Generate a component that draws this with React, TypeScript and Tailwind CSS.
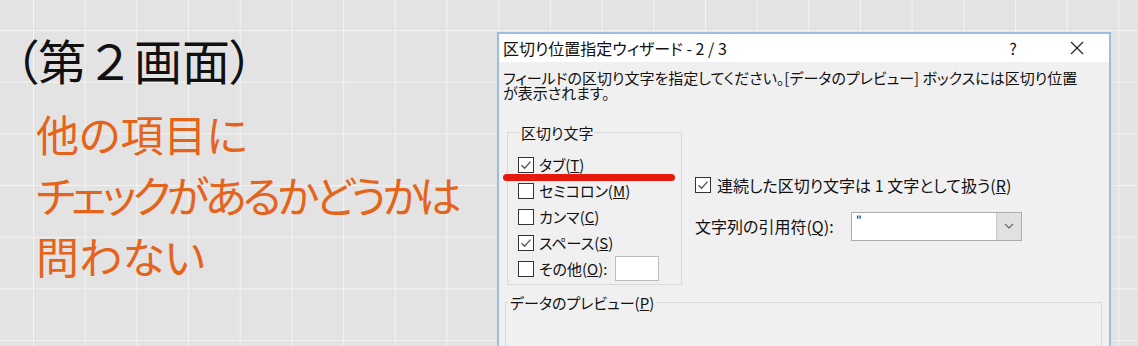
import React from "react"

const jp = "font-['Noto_Sans_CJK_JP',sans-serif]"

function Box({ checked }: { checked?: boolean }) {
  return (
    <span className="w-[16px] h-[16px] border border-[#333] bg-white flex items-center justify-center shrink-0">
      {checked && (
        <svg width="14" height="14" viewBox="0 0 14 14">
          <path d="M2.5 7.2 L5.6 10.2 L11.5 3.6" stroke="#555" strokeWidth="1.3" fill="none" />
        </svg>
      )}
    </span>
  )
}

function Option({ checked, label, k, after }: { checked?: boolean; label: string; k: string; after?: string }) {
  return (
    <div className="flex items-center gap-[5px] h-[26px]">
      <Box checked={checked} />
      <span className="text-[15px] leading-none text-[#111] [font-feature-settings:'palt']">
        {label}(<u>{k}</u>){after}
      </span>
    </div>
  )
}

export default function App() {
  return (
    <div
      className={`${jp} relative w-[1138px] h-[346px] overflow-hidden flex bg-[#e3e3e3] bg-[linear-gradient(to_right,#f3f3f3_1px,transparent_1px),linear-gradient(to_bottom,#f3f3f3_1px,transparent_1px)] bg-[size:51.7px_51.7px] bg-[position:33px_30px]`}
    >
      {/* left caption */}
      <div className="w-[497px] shrink-0 pt-[35px] whitespace-nowrap">
        <div className="pl-[14px] text-[48px] leading-[48px] text-[#111]">
          <span className="[font-feature-settings:'palt']">（</span>第２画面<span className="[font-feature-settings:'palt']">）</span>
        </div>
        <div className="mt-[20px] pl-[36px] text-[43px] leading-[61px] text-[#e5641c] [font-feature-settings:'palt']">
          <div>他の項目に</div>
          <div className="tracking-[-4px]">チェックがあるかどうかは</div>
          <div>問わない</div>
        </div>
      </div>

      {/* dialog */}
      <div className="mt-[32px] w-[614px] h-[330px] shrink-0 border-2 border-[#9cbde2] bg-[#f0f0f0] flex flex-col">
        <div className="h-[34px] bg-white flex items-center pl-[4px] text-[16px] text-[#111] [font-feature-settings:'palt']">
          <span className="flex-1">区切り位置指定ウィザード - 2 / 3</span>
          <span className="w-[20px] text-center mr-[46px]">?</span>
          <svg width="16" height="16" viewBox="0 0 16 16" className="mr-[24px]">
            <path d="M2 2 L14 14 M14 2 L2 14" stroke="#222" strokeWidth="1.2" />
          </svg>
        </div>

        <div className="pl-[4px] pt-[8px] text-[15px] leading-[15px] text-[#111] whitespace-nowrap [font-feature-settings:'palt']">
          <div>フィールドの区切り文字を指定してください。[データのプレビュー] ボックスには区切り位置</div>
          <div>が表示されます。</div>
        </div>

        <div className="flex mt-[24px]">
          <fieldset className="ml-[8px] w-[175px] h-[161px] border border-[#d9d9d9] pl-[10px] pt-[10px]">
            <legend className="ml-[1px] px-[2px] text-[15px] leading-[18px] text-[#111] [font-feature-settings:'palt']">区切り文字</legend>
            <Option checked label="タブ" k="T" />
            <Option label="セミコロン" k="M" />
            <Option label="カンマ" k="C" />
            <Option checked label="スペース" k="S" />
            <div className="flex items-center h-[26px]">
              <Option label="その他" k="O" after=":" />
              <span className="ml-[8px] w-[44px] h-[25px] bg-white border border-[#bdbdbd]" />
            </div>
          </fieldset>

          <div className="ml-[13px] pt-[53px]">
            <div className="flex items-center gap-[6px]">
              <Box checked />
              <span className="text-[16px] leading-none text-[#111] [font-feature-settings:'palt']">
                連続した区切り文字は 1 文字として扱う(<u>R</u>)
              </span>
            </div>
            <div className="flex items-center mt-[19px]">
              <span className="w-[156px] text-[16px] leading-none text-[#111] [font-feature-settings:'palt']">
                文字列の引用符(<u>Q</u>):
              </span>
              <div className="w-[171px] h-[29px] border border-[#adadad] bg-white flex">
                <span className="flex-1 pl-[4px] pt-[1px] text-[12px] leading-none text-[#222]">"</span>
                <span className="w-[25px] bg-[#e1e1e1] border-l border-[#c8c8c8] flex items-center justify-center">
                  <svg width="12" height="12" viewBox="0 0 12 12">
                    <path d="M2 4 L6 8 L10 4" stroke="#666" strokeWidth="1.2" fill="none" />
                  </svg>
                </span>
              </div>
            </div>
          </div>
        </div>

        <fieldset className="ml-[6px] mr-[7px] mt-[9px] h-[80px] border border-[#d9d9d9]">
          <legend className="ml-[2px] px-[2px] text-[15px] leading-[18px] text-[#111] [font-feature-settings:'palt']">
            データのプレビュー(<u>P</u>)
          </legend>
        </fieldset>
      </div>

      {/* red annotation line */}
      <div className="absolute left-[503px] top-[174px] w-[172px] h-[7px] rounded-full bg-[#e61a0c]" />
    </div>
  )
}
